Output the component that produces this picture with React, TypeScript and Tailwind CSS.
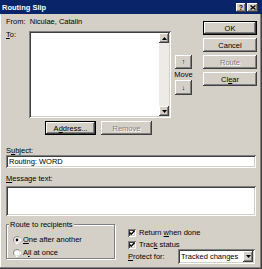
import React from 'react';

const raised =
  'bg-[#d4d0c8] shadow-[inset_-1px_-1px_#404040,inset_1px_1px_#ffffff,inset_-2px_-2px_#808080,inset_2px_2px_#d4d0c8]';
const sunken =
  'bg-white shadow-[inset_1px_1px_#808080,inset_-1px_-1px_#ffffff,inset_2px_2px_#404040,inset_-2px_-2px_#d4d0c8]';

function Btn({ label, u, def, disabled }: { label: string; u?: number; def?: boolean; disabled?: boolean }) {
  const text =
    u === undefined ? (
      label
    ) : (
      <>
        {label.slice(0, u)}
        <span className="underline">{label[u]}</span>
        {label.slice(u + 1)}
      </>
    );
  const inner = (
    <div
      className={`${raised} w-full h-full flex items-center justify-center ${
        disabled ? 'text-[#808080] [text-shadow:1px_1px_0_#ffffff]' : 'text-black'
      }`}
    >
      {text}
    </div>
  );
  return def ? <div className="w-full h-full border border-black">{inner}</div> : inner;
}

function Arrow({ up }: { up?: boolean }) {
  return (
    <svg width="5" height="3" viewBox="0 0 5 3">
      <path d={up ? 'M2.5 0 L5 3 L0 3 Z' : 'M0 0 L5 0 L2.5 3 Z'} fill={'#000'} />
    </svg>
  );
}

function Check() {
  return (
    <div className={`${sunken} w-[8px] h-[8px] flex items-center justify-center`}>
      <svg width="6" height="6" viewBox="0 0 6 6">
        <path d="M0.5 2.5 L2.2 4.3 L5.5 0.8" stroke="#000" strokeWidth="1.4" fill="none" />
      </svg>
    </div>
  );
}

function Radio({ on }: { on?: boolean }) {
  return (
    <svg width="8" height="8" viewBox="0 0 8 8">
      <circle cx="4" cy="4" r="3.5" fill="#fff" stroke="#808080" />
      <path d="M1.5 6.5 A3.5 3.5 0 0 0 6.5 1.5" stroke="#ffffff" fill="none" />
      {on && <circle cx="4" cy="4" r="1.4" fill="#000" />}
    </svg>
  );
}

export default function App() {
  return (
    <div className="w-[262px] h-[269px] bg-[#d4d0c8] overflow-hidden flex flex-col font-['Liberation_Sans',Arial,sans-serif] text-[7.5px] text-black leading-[9px] shadow-[inset_-1px_-1px_#404040,inset_-2px_-2px_#808080,inset_1px_0_#ffffff]">
      {/* title bar */}
      <div className="h-[14px] shrink-0 bg-[#0a246a] flex items-center justify-between pl-[2px] pr-[4px]">
        <span className="text-white font-bold text-[7.5px]">Routing Slip</span>
        <div className="flex gap-[1px]">
          <div className={`${raised} w-[10px] h-[9px] flex items-center justify-center font-bold text-[7px] leading-none`}>?</div>
          <div className={`${raised} w-[11px] h-[9px] flex items-center justify-center`}>
            <svg width="6" height="5" viewBox="0 0 6 5">
              <path d="M0.5 0.5 L5.5 4.5 M5.5 0.5 L0.5 4.5" stroke="#000" strokeWidth="1.3" />
            </svg>
          </div>
        </div>
      </div>

      <div className="pl-[6px] pr-[5px] flex flex-col">
        <div className="flex mt-[3px]">
          <div className="flex flex-col w-[186px]">
            <div className="h-[9px]">From:&nbsp; Niculae, Catalin</div>
            <div className="flex mt-[5px]">
              <div className="w-[23px] -mt-[1px]">
                <span className="underline">T</span>o:
              </div>
              <div className={`${sunken} w-[142px] h-[87px] p-[2px] flex justify-end`}>
                <div className="w-[10px] h-full flex flex-col bg-[#ecebe6]">
                  <div className={`${raised} h-[10px] flex items-center justify-center`}>
                    <Arrow up />
                  </div>
                  <div className="flex-1" />
                  <div className={`${raised} h-[10px] flex items-center justify-center`}>
                    <Arrow />
                  </div>
                </div>
              </div>
              <div className="ml-[4px] w-[17px] flex flex-col items-center justify-center">
                <div className={`${raised} w-[17px] h-[14px] flex items-center justify-center`}>
                  <span className="text-[7px] leading-none">&#8593;</span>
                </div>
                <div className="h-[11px] leading-[11px]">Move</div>
                <div className={`${raised} w-[17px] h-[15px] flex items-center justify-center`}>
                  <span className="text-[7px] leading-none">&#8595;</span>
                </div>
              </div>
            </div>
            <div className="flex mt-[3px] pl-[39px] gap-[5px]">
              <div className="w-[51px] h-[14px]">
                <Btn label="Address..." u={1} def />
              </div>
              <div className="w-[51px] h-[14px]">
                <Btn label="Remove" disabled />
              </div>
            </div>
          </div>
          <div className="ml-auto w-[54px] flex flex-col gap-[3px] mt-[4px]">
            <div className="h-[14px]">
              <Btn label="OK" def />
            </div>
            <div className="h-[14px]">
              <Btn label="Cancel" />
            </div>
            <div className="h-[14px]">
              <Btn label="Route" disabled />
            </div>
            <div className="h-[14px]">
              <Btn label="Clear" u={2} />
            </div>
          </div>
        </div>

        <div className="mt-[11px] h-[9px]">
          S<span className="underline">u</span>bject:
        </div>
        <div className={`${sunken} w-[250px] h-[13px] flex items-center pl-[3px]`}>Routing: WORD</div>

        <div className="mt-[6px] h-[9px]">
          <span className="underline">M</span>essage text:
        </div>
        <div className={`${sunken} mt-[3px] w-[250px] h-[30px]`} />

        <div className="flex mt-[8px]">
          <div className="relative w-[109px] h-[35px] border border-[#808080] shadow-[inset_1px_1px_#ffffff,1px_1px_#ffffff]">
            <div className="absolute -top-[5px] left-[2px] px-[1px] bg-[#d4d0c8]">Route to recipients</div>
            <div className="flex flex-col pl-[6px] pt-[10px] gap-[4px]">
              <div className="flex items-center gap-[2px] h-[9px]">
                <Radio on />
                <span>
                  <span className="underline">O</span>ne after another
                </span>
              </div>
              <div className="flex items-center gap-[2px] h-[9px]">
                <Radio />
                <span>
                  A<span className="underline">l</span>l at once
                </span>
              </div>
            </div>
          </div>
          <div className="ml-[13px] flex flex-col pt-[4px]">
            <div className="flex items-center gap-[3px] h-[9px]">
              <Check />
              <span>
                Return <span className="underline">w</span>hen done
              </span>
            </div>
            <div className="flex items-center gap-[3px] h-[9px] mt-[3px]">
              <Check />
              <span>
                Trac<span className="underline">k</span> status
              </span>
            </div>
            <div className="flex items-center h-[15px]">
              <div className="w-[50px]">
                <span className="underline">P</span>rotect for:
              </div>
              <div className={`${sunken} w-[77px] h-[15px] p-[2px] flex items-center`}>
                <span className="flex-1 pl-[1px]">Tracked changes</span>
                <div className={`${raised} w-[10px] h-full flex items-center justify-center`}>
                  <Arrow />
                </div>
              </div>
            </div>
          </div>
        </div>
      </div>
    </div>
  );
}
